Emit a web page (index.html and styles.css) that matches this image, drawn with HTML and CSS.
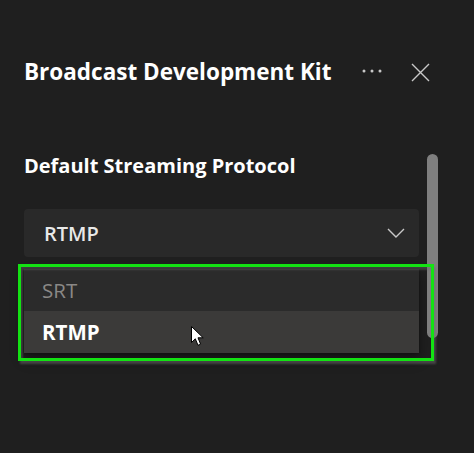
FILE: index.html
```html
<!DOCTYPE html>
<html lang="en">
<head>
<meta charset="utf-8">
<title>Broadcast Development Kit</title>
<link rel="stylesheet" href="styles.css">
</head>
<body>
<div class="panel">
  <header class="head">
    <h1 class="title">Broadcast Development Kit</h1>
    <div class="actions">
      <button class="icon-btn more" aria-label="More options">
        <svg width="20" height="6" viewBox="0 0 20 6"><circle cx="2" cy="3" r="1.5" fill="#c8c8c8"/><circle cx="10" cy="3" r="1.5" fill="#c8c8c8"/><circle cx="18" cy="3" r="1.5" fill="#c8c8c8"/></svg>
      </button>
      <button class="icon-btn close" aria-label="Close">
        <svg width="19" height="19" viewBox="0 0 19 19"><path d="M1 1 L18 18 M18 1 L1 18" stroke="#c8c8c8" stroke-width="1.4" fill="none"/></svg>
      </button>
    </div>
  </header>
  <div class="body">
    <div class="content">
      <div class="label">Default Streaming Protocol</div>
      <div class="dropdown">
        <span class="value">RTMP</span>
        <svg class="chev" width="18" height="10" viewBox="0 0 18 10"><path d="M1 1 L9 9 L17 1" stroke="#c8c8c8" stroke-width="1.4" fill="none"/></svg>
      </div>
      <div class="listbox">
        <div class="option">SRT</div>
        <div class="option selected">RTMP</div>
      </div>
    </div>
    <div class="scroll"><div class="thumb"></div></div>
  </div>
  <div class="highlight"></div>
  <svg class="cursor" width="13" height="21" viewBox="0 0 13 21"><path d="M0.5 0.5 L0.5 16.5 L4.3 12.8 L7 19.3 L9.6 18.2 L7 11.8 L12.2 11.8 Z" fill="#fff" stroke="#000" stroke-width="1"/></svg>
</div>
</body>
</html>
```

FILE: styles.css
```css
* { box-sizing: border-box; }
html, body { margin: 0; padding: 0; }
body {
  background: #1f1f1f;
  width: 474px;
  height: 453px;
  overflow: hidden;
  font-family: "Open Sans", "Noto Sans", sans-serif;
  color: #fff;
}
.panel {
  position: relative;
  padding: 57px 0 0 24px;
  height: 453px;
}
.head {
  display: flex;
  align-items: center;
  height: 30px;
  width: 406px;
}
.title {
  margin: 0;
  font-size: 22.5px;
  line-height: 30px;
  font-weight: 700;
  color: #fff;
  flex: 1;
  white-space: nowrap;
}
.actions {
  display: flex;
  align-items: center;
  gap: 29px;
}
.icon-btn {
  background: none;
  border: 0;
  padding: 0;
  margin: 0;
  display: flex;
  align-items: center;
  justify-content: center;
  cursor: pointer;
}
.more {
  margin-top: -2px;
}
.body {
  display: flex;
  gap: 8px;
  margin-top: 67px;
}
.content {
  width: 395px;
}
.label {
  font-size: 20px;
  line-height: 24px;
  font-weight: 700;
  color: #fff;
}
.dropdown {
  margin-top: 31px;
  height: 48px;
  background: #292929;
  border-radius: 4px;
  display: flex;
  align-items: center;
  justify-content: space-between;
  padding: 0 14px 0 20px;
}
.value {
  font-size: 20px;
  font-weight: 600;
  color: #e8e8e8;
}
.listbox {
  margin-top: 12px;
  background: #2b2b2b;
  box-shadow: 0 0 2px rgba(0,0,0,0.3), 0 6px 12px rgba(0,0,0,0.4);
}
.option {
  height: 42px;
  display: flex;
  align-items: center;
  padding-left: 18px;
  font-size: 20.5px;
  color: #8a8886;
}
.option.selected {
  background: #3b3a39;
  color: #fff;
  font-weight: 700;
}
.scroll {
  width: 11px;
}
.thumb {
  margin-top: 0;
  width: 11px;
  height: 184px;
  background: #7f7f7f;
  border-radius: 6px;
}
.highlight {
  position: absolute;
  left: 18px;
  top: 264px;
  width: 416px;
  height: 97px;
  border: 3px solid #13e213;
  box-shadow: 2px 3px 2px rgba(110,110,110,0.5), inset 2px 3px 2px rgba(110,110,110,0.4);
}
.cursor {
  position: absolute;
  left: 191px;
  top: 326px;
}
```
